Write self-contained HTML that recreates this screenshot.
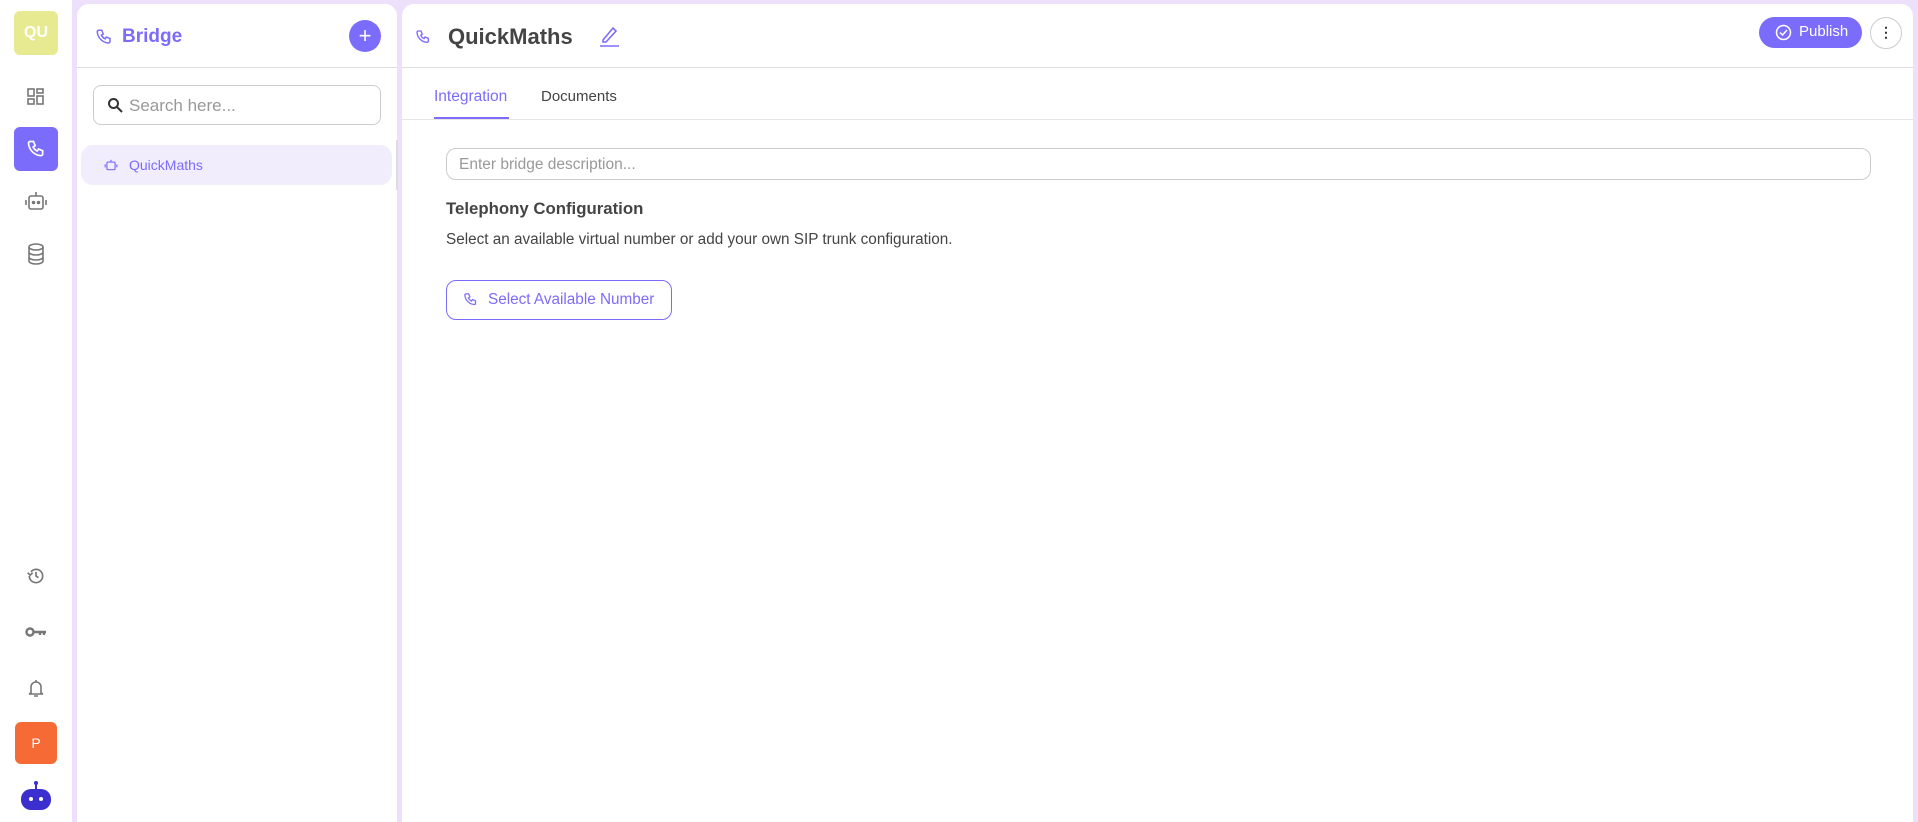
<!DOCTYPE html>
<html><head><meta charset="utf-8"><style>
*{box-sizing:border-box;margin:0;padding:0}
body{width:1918px;height:822px;overflow:hidden;background:#fff;font-family:"Liberation Sans",sans-serif;position:relative}
.abs{position:absolute}
.frame{left:72px;top:0;width:1846px;height:822px;background:#ece0fb}
.p1{left:77px;top:4px;width:320px;height:818px;background:#fff;border-radius:12px 12px 0 0}
.p2{left:402px;top:4px;width:1511px;height:818px;background:#fff;border-radius:12px 12px 0 0}
svg{display:block}
</style></head><body>
<div class="abs" style="left:14px;top:11px;width:44px;height:44px;background:#e7ea90;border-radius:6px;color:#fff;font-weight:bold;font-size:16px;line-height:44px;text-align:center">QU</div>
<svg class="abs" style="left:27px;top:88px" width="18" height="18" viewBox="0 0 18 18" fill="none" stroke="#777" stroke-width="1.6"><rect x="1" y="1" width="6" height="7"/><rect x="10" y="1" width="6" height="4"/><rect x="1" y="11" width="6" height="5"/><rect x="10" y="8" width="6" height="8"/></svg>
<div class="abs" style="left:14px;top:127px;width:44px;height:44px;background:#7b6cfb;border-radius:6px"></div>
<svg class="abs" style="left:26px;top:139px" width="20" height="20" viewBox="0 0 24 24" fill="none" stroke="#fff" stroke-width="2"><path d="M5 3h4l2 5-2.5 1.5a11 11 0 005 5L15 12l5 2v4a2 2 0 01-2 2A16 16 0 013 5a2 2 0 012-2"/></svg>
<svg class="abs" style="left:24px;top:190px" width="24" height="22" viewBox="0 0 24 22" fill="none" stroke="#777" stroke-width="1.6"><rect x="5" y="6" width="14" height="13" rx="2"/><path d="M12 6V2M2 10v5M22 10v5"/><circle cx="9.5" cy="12.5" r="1" fill="#777"/><circle cx="14.5" cy="12.5" r="1" fill="#777"/></svg>
<svg class="abs" style="left:27px;top:243px" width="18" height="22" viewBox="0 0 18 22" fill="none" stroke="#777" stroke-width="1.6"><ellipse cx="9" cy="4" rx="7" ry="3"/><path d="M2 4v14c0 1.7 3 3 7 3s7-1.3 7-3V4M2 9c0 1.7 3 3 7 3s7-1.3 7-3M2 14c0 1.7 3 3 7 3s7-1.3 7-3"/></svg>
<svg class="abs" style="left:26px;top:566px" width="20" height="20" viewBox="0 0 24 24" fill="none" stroke="#777" stroke-width="2"><path d="M4 12a8 8 0 108-8 8 8 0 00-6 3"/><path d="M2 8l3 3 3-3"/><path d="M12 7v5l3 2"/></svg>
<svg class="abs" style="left:25px;top:625px" width="22" height="14" viewBox="0 0 22 14" fill="none" stroke="#777" stroke-width="2.4"><circle cx="5" cy="7" r="3.5"/><path d="M9 7h12M15 7v3M19 7v3"/></svg>
<svg class="abs" style="left:28px;top:678px" width="16" height="20" viewBox="0 0 16 20" fill="none" stroke="#777" stroke-width="1.6"><path d="M3 15V9a5 5 0 0110 0v6l2 1H1z"/><path d="M6 18h4M8 2v2"/></svg>
<div class="abs" style="left:15px;top:722px;width:42px;height:42px;background:#f66a36;border-radius:6px;color:#fff;font-size:14px;line-height:42px;text-align:center">P</div>
<svg class="abs" style="left:20px;top:780px" width="32" height="32" viewBox="0 0 32 32"><circle cx="16" cy="3" r="2" fill="#3b2fcf"/><rect x="15" y="3" width="2" height="6" fill="#3b2fcf"/><rect x="1" y="9" width="30" height="21" rx="10" fill="#3b2fcf"/><circle cx="11" cy="19" r="2" fill="#fff"/><circle cx="21" cy="19" r="2" fill="#fff"/></svg>

<div class="abs frame"></div>
<div class="abs p1"></div>
<div class="abs" style="left:77px;top:67px;width:320px;height:1px;background:#ddd"></div>
<svg class="abs" style="left:95px;top:28px" width="18" height="18" viewBox="0 0 24 24" fill="none" stroke="#7b6cfb" stroke-width="2"><path d="M5 3h4l2 5-2.5 1.5a11 11 0 005 5L15 12l5 2v4a2 2 0 01-2 2A16 16 0 013 5a2 2 0 012-2"/></svg>
<div class="abs" style="left:122px;top:26px;font-size:19px;font-weight:bold;color:#7b6cfb">Bridge</div>
<div class="abs" style="left:349px;top:20px;width:32px;height:32px;border-radius:50%;background:#7b6cfb;color:#fff;font-size:22px;line-height:31px;text-align:center">+</div>
<div class="abs" style="left:93px;top:85px;width:288px;height:40px;border:1px solid #ccc;border-radius:8px"></div>
<svg class="abs" style="left:107px;top:97px" width="16" height="16" viewBox="0 0 16 16" fill="none" stroke="#333" stroke-width="2"><circle cx="6.5" cy="6.5" r="4.5"/><path d="M10 10l5 5"/></svg>
<div class="abs" style="left:129px;top:96px;font-size:17px;color:#999">Search here...</div>
<div class="abs" style="left:81px;top:145px;width:311px;height:40px;background:#f1edfd;border-radius:12px"></div>
<svg class="abs" style="left:104px;top:158px" width="14" height="14" viewBox="0 0 24 22" fill="none" stroke="#7b6cfb" stroke-width="2"><rect x="5" y="6" width="14" height="13" rx="2"/><path d="M12 6V2M2 10v5M22 10v5"/></svg>
<div class="abs" style="left:129px;top:157px;font-size:14px;color:#7b6cfb">QuickMaths</div>
<div class="abs" style="left:396px;top:140px;width:2px;height:50px;background:#ddd"></div>

<div class="abs p2"></div>
<div class="abs" style="left:402px;top:67px;width:1511px;height:1px;background:#ddd"></div>
<svg class="abs" style="left:415px;top:29px" width="16" height="16" viewBox="0 0 24 24" fill="none" stroke="#7b6cfb" stroke-width="2"><path d="M5 3h4l2 5-2.5 1.5a11 11 0 005 5L15 12l5 2v4a2 2 0 01-2 2A16 16 0 013 5a2 2 0 012-2"/></svg>
<div class="abs" style="left:448px;top:24px;font-size:22px;font-weight:bold;color:#444">QuickMaths</div>
<svg class="abs" style="left:599px;top:25px" width="22" height="22" viewBox="0 0 22 22" fill="none" stroke="#7b6cfb" stroke-width="1.6"><path d="M4 15L14 3l3 3L7 17H4z"/><path d="M1 21h19"/></svg>
<div class="abs" style="left:1759px;top:17px;width:103px;height:31px;background:#7b6cfb;border-radius:16px"></div>
<svg class="abs" style="left:1775px;top:24px" width="17" height="17" viewBox="0 0 17 17" fill="none" stroke="#fff" stroke-width="1.5"><circle cx="8.5" cy="8.5" r="7"/><path d="M5 8.5l2.5 2.5L12 6"/></svg>
<div class="abs" style="left:1799px;top:23px;font-size:15px;color:#fff">Publish</div>
<div class="abs" style="left:1870px;top:17px;width:32px;height:32px;border:1px solid #ccc;border-radius:50%;text-align:center;font-size:14px;line-height:29px;font-weight:bold;color:#333">⋮</div>
<div class="abs" style="left:402px;top:119px;width:1511px;height:1px;background:#e6e6e6"></div>
<div class="abs" style="left:434px;top:88px;font-size:15.5px;color:#7b6cfb">Integration</div>
<div class="abs" style="left:434px;top:117px;width:75px;height:2px;background:#7b6cfb"></div>
<div class="abs" style="left:541px;top:88px;font-size:15px;color:#444">Documents</div>
<div class="abs" style="left:446px;top:148px;width:1425px;height:32px;border:1px solid #ccc;border-radius:10px"></div>
<div class="abs" style="left:459px;top:156px;font-size:15.5px;color:#999">Enter bridge description...</div>
<div class="abs" style="left:446px;top:199px;font-size:16.8px;font-weight:bold;color:#444">Telephony Configuration</div>
<div class="abs" style="left:446px;top:231px;font-size:15.3px;color:#444">Select an available virtual number or add your own SIP trunk configuration.</div>
<div class="abs" style="left:446px;top:280px;width:226px;height:40px;border:1px solid #7b6cfb;border-radius:10px"></div>
<svg class="abs" style="left:463px;top:292px" width="15" height="15" viewBox="0 0 24 24" fill="none" stroke="#7b6cfb" stroke-width="2"><path d="M5 3h4l2 5-2.5 1.5a11 11 0 005 5L15 12l5 2v4a2 2 0 01-2 2A16 16 0 013 5a2 2 0 012-2"/></svg>
<div class="abs" style="left:488px;top:291px;font-size:15.3px;color:#7b6cfb">Select Available Number</div>
</body></html>
